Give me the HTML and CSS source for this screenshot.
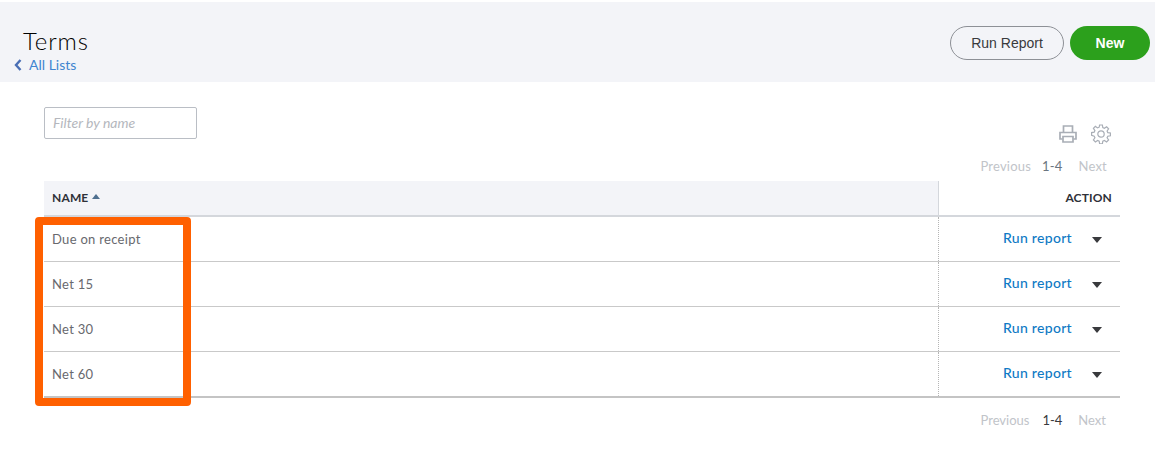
FILE: index.html
```html
<!DOCTYPE html>
<html lang="en">
<head>
<meta charset="utf-8">
<title>Terms</title>
<link rel="stylesheet" href="styles.css">
</head>
<body>
<header class="page-head">
  <div class="head-left">
    <h1 class="title">Terms</h1>
    <a class="back"><svg class="back-icon" width="8" height="12" viewBox="0 0 8 12"><path d="M6.5 1 L2 6 L6.5 11" fill="none" stroke="#4a6fb5" stroke-width="2.4"/></svg>All Lists</a>
  </div>
  <div class="head-actions">
    <button class="btn btn-outline">Run Report</button>
    <button class="btn btn-green">New</button>
  </div>
</header>
<main class="content">
  <div class="toolbar">
    <div class="filter">Filter by name</div>
    <div class="tools">
      <svg width="20" height="20" viewBox="0 0 20 20" fill="none" stroke="#a9aeb6" stroke-width="1.7"><path d="M5.5 8V2h9v6"/><path d="M4.5 15H2V8.5h16V15h-2.5"/><path d="M5 12.5h10V18H5z"/></svg>
      <svg width="20" height="20" viewBox="0 0 20 20" fill="none" stroke="#a9aeb6" stroke-width="1.2"><circle cx="10" cy="10" r="3.2"/><path d="M8.6 1h2.8l.4 2.6 1.6.7 2.2-1.5 2 2-1.5 2.2.7 1.6 2.6.4v2.8l-2.6.4-.7 1.6 1.5 2.2-2 2-2.2-1.5-1.6.7-.4 2.6H8.6l-.4-2.6-1.6-.7-2.2 1.5-2-2 1.5-2.2-.7-1.6L.6 11.4V8.6l2.6-.4.7-1.6-1.5-2.2 2-2 2.2 1.5 1.6-.7z"/></svg>
    </div>
  </div>
  <div class="pager pager-top"><span class="muted">Previous</span><span class="range range-top">1-4</span><span class="muted">Next</span></div>
  <div class="table">
    <div class="row row-head">
      <div class="cell-name head-name">NAME <span class="sort"></span></div>
      <div class="cell-action head-action">ACTION</div>
    </div>
    <div class="row">
      <div class="cell-name">Due on receipt</div>
      <div class="cell-action"><a class="run">Run report</a><span class="caret"></span></div>
    </div>
    <div class="row">
      <div class="cell-name">Net 15</div>
      <div class="cell-action"><a class="run">Run report</a><span class="caret"></span></div>
    </div>
    <div class="row">
      <div class="cell-name">Net 30</div>
      <div class="cell-action"><a class="run">Run report</a><span class="caret"></span></div>
    </div>
    <div class="row row-last">
      <div class="cell-name">Net 60</div>
      <div class="cell-action"><a class="run">Run report</a><span class="caret"></span></div>
    </div>
  </div>
  <div class="pager pager-bottom"><span class="muted">Previous</span><span class="range">1-4</span><span class="muted">Next</span></div>
</main>
<div class="highlight"></div>
</body>
</html>
```
FILE: styles.css
```css
* { box-sizing: border-box; }
html, body { margin: 0; height: 100%; }
body {
  position: relative;
  padding-top: 2px;
  background: #fff;
  font-family: Lato, "Liberation Sans", sans-serif;
  overflow: hidden;
}
.page-head {
  height: 80px;
  background: #f3f4f8;
  display: flex;
  justify-content: space-between;
  padding: 24px 5px 0 14px;
}
.head-left { display: flex; flex-direction: column; }
.title {
  margin: 0 0 0 9px;
  font-size: 24px;
  line-height: 30px;
  font-weight: 300;
  color: #000;
  letter-spacing: 0.9px;
}
.back {
  display: flex;
  align-items: center;
  font-size: 14px;
  line-height: 18px;
  color: #3f85d0;
  letter-spacing: 0;
}
.back-icon { margin-right: 7px; }
.head-actions { display: flex; gap: 6px; }
.btn {
  height: 34px;
  border-radius: 17px;
  font-family: "Liberation Sans", sans-serif;
  font-size: 14px;
  padding: 0;
}
.btn-outline {
  width: 114px;
  background: transparent;
  border: 1px solid #8d9096;
  color: #393a3d;
}
.btn-green {
  width: 80px;
  background: #2ca01c;
  border: 0;
  color: #fff;
  font-weight: 700;
}
.content { padding: 25px 35px 0 44px; }
.toolbar { display: flex; justify-content: space-between; height: 49px; }
.filter {
  width: 153px;
  height: 32px;
  border: 1px solid #babec5;
  border-radius: 2px;
  padding: 0 8px;
  font-size: 14px;
  line-height: 30px;
  font-style: italic;
  color: #b4b7bd;
}
.tools { display: flex; gap: 13px; padding: 17px 9px 0 0; height: 37px; }
.pager { display: flex; font-size: 13px; letter-spacing: 0.2px; }
.muted { color: #c1c4c9; }
.range { color: #393a3d; margin: 0 16px 0 13px; }
.range-top { color: #6b7580; margin: 0 16px 0 11px; }
.pager-top { justify-content: flex-end; height: 25px; line-height: 18px; padding: 1px 13px 0 0; }
.pager-bottom { justify-content: flex-end; padding: 13px 14px 0 0; line-height: 18px; letter-spacing: 0; }
.row {
  display: flex;
  height: 45px;
  border-bottom: 1px solid #c9c9c9;
  font-size: 13px;
  color: #68696e;
  letter-spacing: 0.3px;
}
.row-head {
  height: 36px;
  background: #f3f4f8;
  border-bottom: 2px solid #d4d7dc;
  font-size: 12px;
  font-weight: 700;
  color: #2f3138;
  letter-spacing: 0.15px;
}
.row-last { border-bottom: 2px solid #c4c4c4; height: 46px; }
.cell-name {
  width: 894px;
  padding-left: 8px;
  display: flex;
  align-items: center;
  gap: 4px;
}
.row-head .cell-name { background: #f3f4f8; padding-bottom: 2px; }
.cell-action {
  flex: 1;
  border-left: 1px dotted #b5b5b5;
  display: flex;
  align-items: center;
  justify-content: flex-end;
  padding: 0 8px 3px 0;
}
.row-head .head-action { background: #fff; border-left: 1px solid #d4d7dc; padding-bottom: 2px; }
.sort {
  display: inline-block;
  margin-top: -1px;
  border-left: 4px solid transparent;
  border-right: 4px solid transparent;
  border-bottom: 5px solid #4f7090;
}
.run {
  font-size: 14px;
  font-weight: 500;
  color: #0f7ac5;
  letter-spacing: 0.3px;
}
.caret {
  margin-left: 20px;
  margin-right: 10px;
  margin-top: 5px;
  border-left: 5px solid transparent;
  border-right: 5px solid transparent;
  border-top: 6px solid #393a3d;
}
.highlight {
  position: absolute;
  left: 35px;
  top: 217px;
  width: 156px;
  height: 189px;
  border: 8px solid #ff6000;
  border-radius: 4px;
  pointer-events: none;
}
```
